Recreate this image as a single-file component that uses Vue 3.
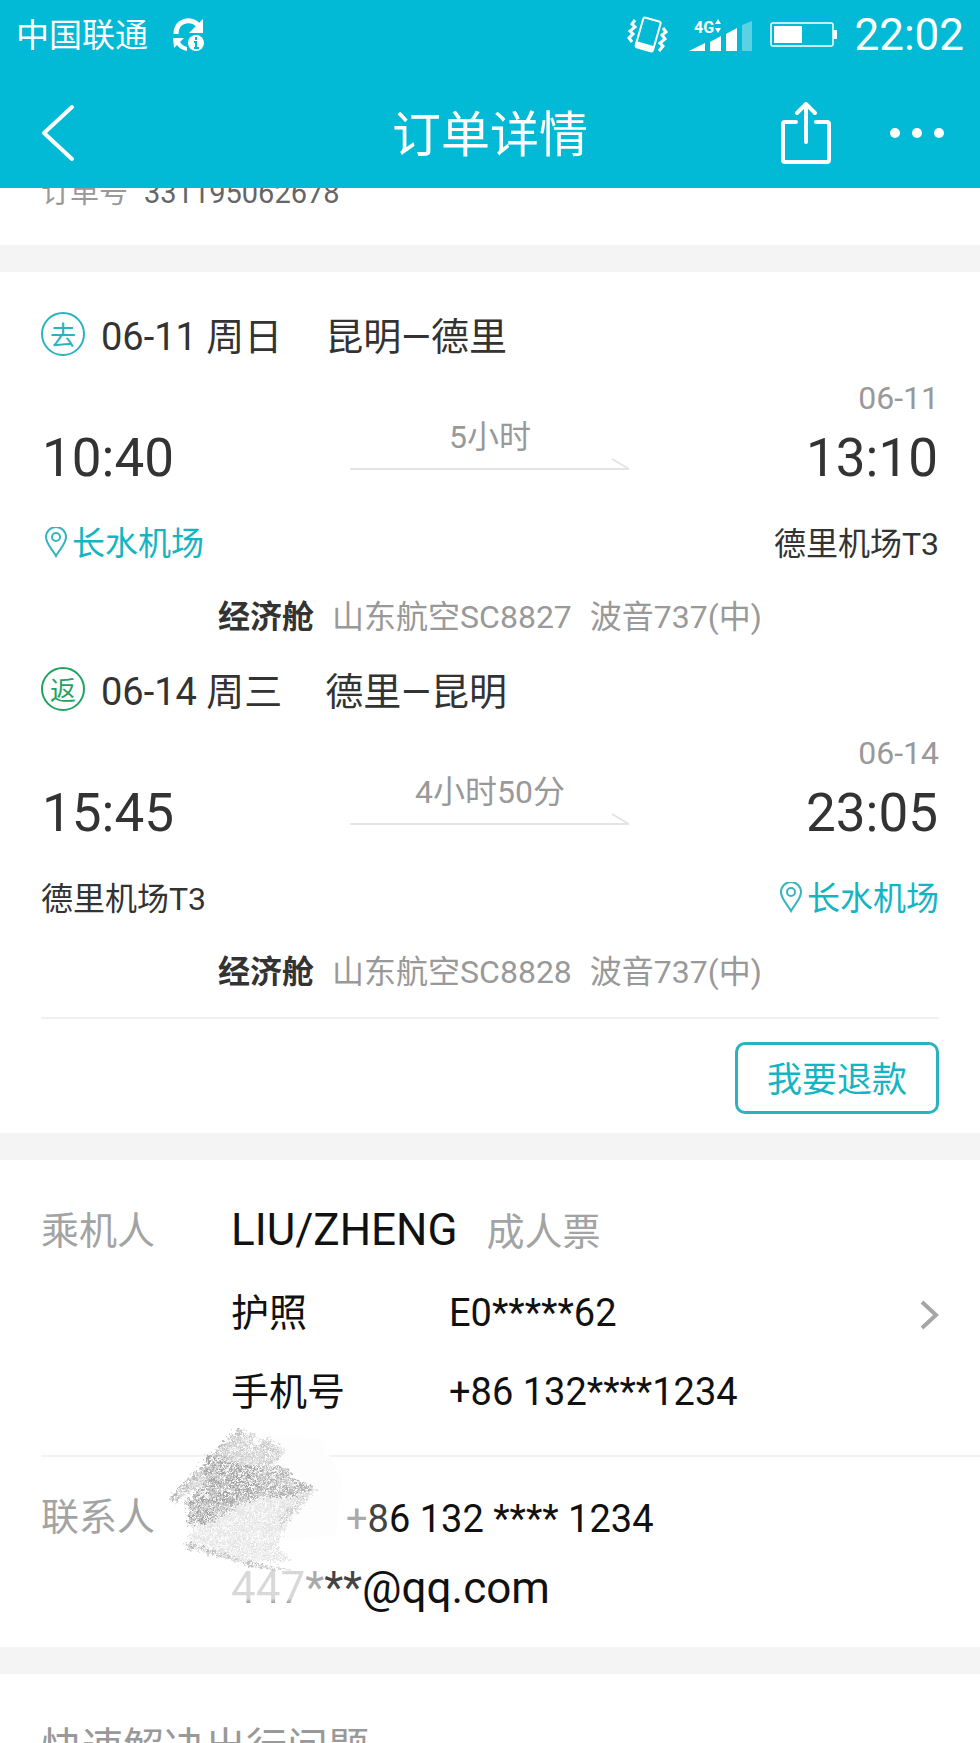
<script setup>
const legs = [
  {
    kind: 'out', badge: '去', date: '06-11', day: '周日', route: '昆明—德里',
    depart: '10:40', arrive: '13:10', arriveDate: '06-11', duration: '5小时',
    from: { name: '长水机场', map: true }, to: { name: '德里机场T3', map: false },
    cabin: '经济舱', flight: '山东航空SC8827', plane: '波音737(中)',
  },
  {
    kind: 'back', badge: '返', date: '06-14', day: '周三', route: '德里—昆明',
    depart: '15:45', arrive: '23:05', arriveDate: '06-14', duration: '4小时50分',
    from: { name: '德里机场T3', map: false }, to: { name: '长水机场', map: true },
    cabin: '经济舱', flight: '山东航空SC8828', plane: '波音737(中)',
  },
]
</script>

<template>
  <div class="screen">
    <header class="top">
      <div class="status">
        <span class="carrier">中国联通</span>
        <svg class="sync" width="34" height="36" viewBox="0 0 34 36" aria-hidden="true">
          <path d="M4 17 C4 3 19 0 27 9" fill="none" stroke="#fff" stroke-width="5" />
          <path d="M31 2 V16 H17 Z" fill="#fff" />
          <path d="M1 21 H12 L8 25 C10 28 12 29 15 30 V34 C10 33 7 31 5 28 L2 31 Z" fill="#fff" />
          <circle cx="24" cy="26" r="8" fill="#fff" />
          <path d="M24 20 v3 M22 25 h2 v6 M22 31 h5" fill="none" stroke="#02bad5" stroke-width="2" />
        </svg>
        <span class="grow"></span>
        <svg class="vibrate" width="42" height="38" viewBox="0 0 42 38" aria-hidden="true" fill="none" stroke="#fff">
          <g transform="rotate(16 21 19)">
            <rect x="12" y="3" width="18" height="31" rx="2" stroke-width="2" />
            <path d="M12 31 H30" stroke-width="6" />
          </g>
          <path d="M8 4 l-3 4 l3 3 l-5 4 l3 3 l-4 4 l3 4" stroke-width="3" />
          <path d="M36 12 l3 4 l-4 3 l3 4 l-5 4 l3 3 l-4 5" stroke-width="3" />
        </svg>
        <svg class="signal" width="64" height="36" viewBox="0 0 64 36" role="img" aria-label="4G">
          <g fill="#fff">
            <path d="M0 34 L16 26 V34 Z M21 25 L32 19 V34 H21 Z M37 17 L48 11 V34 H37 Z" />
            <path d="M26 7 l3 -5 l3 5 Z M26 11 l3 5 l3 -5 Z" />
            <text x="5" y="16" class="gen">4G</text>
          </g>
          <path d="M53 8 L63 4 V34 H53 Z" fill="#fff" opacity=".35" />
        </svg>
        <svg class="battery" width="68" height="26" viewBox="0 0 68 26" aria-hidden="true">
          <rect x="1" y="1" width="62" height="23" rx="2" fill="none" stroke="#fff" stroke-width="1.5" />
          <rect x="4" y="4" width="28" height="17" fill="#fff" />
          <rect x="63" y="8" width="4" height="9" fill="#fff" />
        </svg>
        <time class="clock">22:02</time>
      </div>
      <nav class="bar">
        <div class="side">
          <button class="icon" type="button" aria-label="返回">
            <svg width="40" height="58" viewBox="-6 0 40 58" fill="none" stroke="#fff" stroke-width="4" stroke-linecap="round" stroke-linejoin="round">
              <path d="M31 3 L3 29 L31 55" />
            </svg>
          </button>
        </div>
        <h1>订单详情</h1>
        <div class="side right">
          <button class="icon" type="button" aria-label="分享">
            <svg width="52" height="64" viewBox="0 0 52 64" fill="none" stroke="#fff" stroke-width="4" stroke-linecap="round" stroke-linejoin="round">
              <path d="M16 21 H5 Q3 21 3 23 V59 Q3 61 5 61 H47 Q49 61 49 59 V23 Q49 21 47 21 H36 M26 3 V41 M17 12 L26 3 L35 12" />
            </svg>
          </button>
          <button class="icon" type="button" aria-label="更多">
            <svg width="56" height="12" viewBox="0 0 56 12" fill="#fff">
              <circle cx="6" cy="6" r="5" /><circle cx="28" cy="6" r="5" /><circle cx="50" cy="6" r="5" />
            </svg>
          </button>
        </div>
      </nav>
    </header>

    <main class="scroll">
      <section class="card order">
        <p class="order-no"><span class="muted">订单号</span><span>331195062678</span></p>
      </section>

      <section class="card trip">
        <article v-for="leg in legs" :key="leg.kind" class="leg">
          <h2 class="leg-head">
            <span class="badge" :class="leg.kind">{{ leg.badge }}</span>
            <span>{{ leg.date }} {{ leg.day }}</span>
            <span class="route">{{ leg.route }}</span>
          </h2>
          <div class="times">
            <time class="time">{{ leg.depart }}</time>
            <div class="duration">
              <span>{{ leg.duration }}</span>
              <svg viewBox="0 0 280 14" aria-hidden="true">
                <path d="M0 12 H279 M262 2 L279 12" fill="none" stroke="#e4e4e4" stroke-width="2" />
              </svg>
            </div>
            <div class="arrive">
              <span class="small">{{ leg.arriveDate }}</span>
              <time class="time">{{ leg.arrive }}</time>
            </div>
          </div>
          <div class="airports">
            <template v-for="port in [leg.from, leg.to]" :key="port.name">
              <a v-if="port.map" href="#map" class="map">
                <svg width="28" height="34" viewBox="-3 1 28 34" fill="none" stroke="#35b5bf" stroke-width="2" aria-hidden="true">
                  <path d="M12 30 C9 24 2 18 2 11 A10 10 0 0 1 22 11 C22 18 15 24 12 30 Z" />
                  <circle cx="12" cy="11" r="4" />
                </svg>{{ port.name }}
              </a>
              <span v-else>{{ port.name }}</span>
            </template>
          </div>
          <p class="flight">
            <strong>{{ leg.cabin }}</strong><span>{{ leg.flight }}</span><span>{{ leg.plane }}</span>
          </p>
        </article>
        <footer class="actions">
          <button type="button" class="refund">我要退款</button>
        </footer>
      </section>

      <section class="card people">
        <div class="passenger">
          <span class="label">乘机人</span>
          <div class="details">
            <p class="name">LIU/ZHENG <span class="label">成人票</span></p>
            <p class="pair"><span>护照</span><span>E0*****62</span></p>
            <p class="pair"><span>手机号</span><span>+86 132****1234</span></p>
          </div>
          <button class="icon" type="button" aria-label="乘机人详情">
            <svg width="20" height="30" viewBox="0 0 20 30" fill="none" stroke="#a6a6a6" stroke-width="4">
              <path d="M3 2 L17 15 L3 28" />
            </svg>
          </button>
        </div>
        <div class="contact">
          <span class="label">联系人</span>
          <div class="details">
            <p class="phone"><span class="worn">+</span><span class="half">8</span>6 132 **** 1234</p>
            <p class="mail"><span class="erased">447</span><span class="worn">*</span><span class="half">**</span>@qq.com</p>
          </div>
          <svg class="scribble" width="190" height="160" viewBox="0 0 190 160" aria-hidden="true">
            <defs>
              <filter id="grain" x="0" y="0" width="190" height="160" filterUnits="userSpaceOnUse">
                <feTurbulence type="fractalNoise" baseFrequency=".3" numOctaves="4" seed="8" result="n" />
                <feColorMatrix in="n" type="matrix" values="0 0 0 0 0  0 0 0 0 0  0 0 0 0 0  2.4 2.4 0 0 -1.8" result="a" />
                <feComposite in="SourceGraphic" in2="a" operator="in" result="g" />
                <feDisplacementMap in="g" in2="n" scale="12" xChannelSelector="R" yChannelSelector="G" />
              </filter>
            </defs>
            <path d="M74 12 L160 20 L182 60 L176 116 L120 122 Z" fill="#fdfdfd" />
            <g filter="url(#grain)" fill="#999">
              <path d="M8 80 L80 7 L84 13 L96 18 L88 34 L104 18 L126 31 L112 46 L84 58 L28 74 L12 84 Z" opacity=".5" />
              <path d="M8 80 L80 7 L83 12 L16 84 Z" opacity=".35" />
              <path d="M46 36 L84 46 L126 48 L134 60 L154 68 L132 78 L104 78 L76 88 L52 104 L28 106 L26 82 L44 66 Z" opacity=".75" />
              <path d="M28 84 L54 66 L90 56 L104 72 L60 88 L46 102 L28 106 Z" fill="#777" opacity=".3" />
              <path d="M154 68 L138 92 L122 112 L118 128 L130 142 L92 142 L26 126 L32 106 L80 84 L110 76 Z" opacity=".28" />
              <path d="M150 68 L156 72 L132 96 L118 112 L122 96 Z" opacity=".3" />
              <path d="M25 123 L60 133 L98 145 L138 152 L96 149 L60 138 L26 129 Z" opacity=".6" />
            </g>
          </svg>
        </div>
      </section>

      <section class="card help">
        <h2>快速解决出行问题</h2>
      </section>
    </main>
  </div>
</template>

<style>
body { margin: 0; background: #f4f4f4; }
</style>

<style scoped>
.screen {
  height: 100vh;
  display: flex;
  flex-direction: column;
  overflow: hidden;
  font-family: Roboto, "Noto Sans CJK SC", sans-serif;
  font-size: 32px;
  line-height: 40px;
  color: #333;
}
h1, h2, p { margin: 0; font-weight: 400; }
button { font: inherit; cursor: pointer; }
a { color: inherit; text-decoration: none; }
svg { display: block; flex: none; }
.icon { padding: 0; border: 0; background: none; }

.top { flex: none; background: #02bad5; color: #fff; }
.status { display: flex; align-items: center; height: 70px; padding: 0 16px; }
.carrier { font-size: 33px; line-height: 44px; padding-top: 2px; }
.sync { margin-left: 24px; }
.grow { flex: 1; }
.signal { margin-left: 20px; }
.gen { font-size: 16px; font-weight: 700; }
.battery { margin-left: 17px; }
.clock { margin-left: 16px; font-size: 44px; }
.bar { display: flex; align-items: center; height: 110px; padding: 8px 35px 0; }
.bar h1 { padding-top: 6px; font-size: 49px; line-height: 60px; }
.side { flex: 1; display: flex; align-items: center; }
.right { justify-content: flex-end; gap: 57px; }

.scroll { flex: 1; min-height: 0; overflow: hidden; display: flex; flex-direction: column; gap: 27px; }
.card { flex: none; background: #fff; }

.order { display: flex; align-items: flex-end; height: 57px; overflow: hidden; padding: 0 41px; }
.order-no { display: flex; gap: 16px; padding-bottom: 32px; font-size: 29px; color: #666; }
.muted { color: #999; }

.trip { padding: 40px 41px 0; }
.leg { margin-bottom: 30px; }
.leg:last-of-type { margin-bottom: 25px; }
.leg-head { display: flex; height: 48px; font-size: 38px; line-height: 50px; white-space: nowrap; }
.badge {
  box-sizing: border-box;
  width: 44px;
  height: 44px;
  margin-right: 16px;
  border: 2px solid;
  border-radius: 50%;
  font-size: 26px;
  line-height: 44px;
  text-align: center;
}
.out { color: #2ab3be; }
.back { color: #1fa35f; }
.route { margin-left: 43px; }
.times { display: grid; grid-template-columns: 1fr 280px 1fr; align-items: end; margin-top: 18px; }
.time { padding: 0 1px; font-size: 53px; line-height: 60px; }
.duration { padding-bottom: 17px; text-align: center; color: #999; }
.duration svg { width: 100%; }
.arrive { display: flex; flex-direction: column; align-items: flex-end; gap: 10px; }
.small { color: #999; }
.airports { display: flex; justify-content: space-between; margin-top: 36px; }
.map { display: flex; align-items: center; gap: 3px; font-size: 33px; color: #14b5c3; }
.flight { display: flex; justify-content: center; gap: 18px; margin-top: 33px; color: #999; }
.flight strong { color: #333; }
.actions { display: flex; justify-content: flex-end; padding: 23px 0 19px; border-top: 2px solid #f0f0f0; }
.refund {
  box-sizing: border-box;
  width: 204px;
  height: 72px;
  padding: 6px 0 0;
  border: 3px solid #2ab3be;
  border-radius: 10px;
  background: #fff;
  color: #14b5c3;
  font-size: 35px;
}

.people { font-size: 38px; line-height: 48px; color: #111; }
.passenger { display: flex; align-items: flex-start; margin-left: 41px; padding: 44px 41px 39px 0; border-bottom: 2px solid #f2f2f2; }
.passenger > .icon { align-self: center; padding-top: 10px; }
.label { color: #a3a3a3; font-size: 38px; }
.passenger > .label, .contact > .label { width: 190px; flex: none; }
.passenger > .label { line-height: 54px; }
.contact > .label { line-height: 44px; }
.details { flex: 1; }
.name { font-size: 44px; line-height: 52px; }
.name .label { margin-left: 18px; }
.pair { display: grid; grid-template-columns: 218px 1fr; margin-top: 31px; }
.contact { position: relative; display: flex; padding: 38px 41px 33px; }
.phone { margin-left: 115px; }
.mail { margin-top: 19px; font-size: 44px; line-height: 52px; }
.erased { color: transparent; background: linear-gradient(#d8d8d8 70%, #777 85%); background-clip: text; }
.worn { color: #aaa; }
.half { color: #444; }
.scribble { position: absolute; left: 160px; top: -38px; }

.help { height: 120px; padding: 44px 41px 0; }
.help h2 { font-size: 41px; line-height: 60px; color: #999; }
</style>
